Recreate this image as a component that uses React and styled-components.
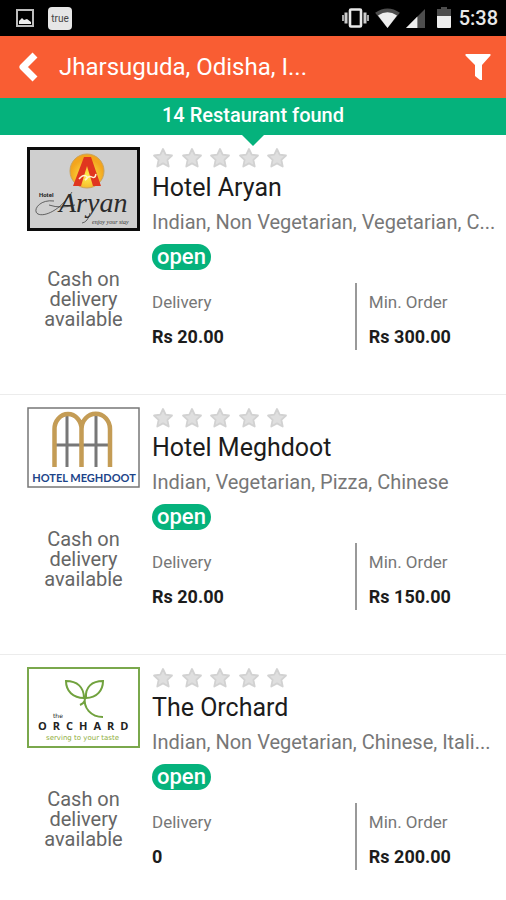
import React from 'react';
import styled, { createGlobalStyle } from 'styled-components';

const GlobalStyle = createGlobalStyle`
  * {
    box-sizing: border-box;
  }

  body {
    margin: 0;
    background: #fff;
    font-family: Roboto, 'Noto Sans', sans-serif;
  }
`;

const Screen = styled.div`
  display: flex;
  flex-direction: column;
  height: 100vh;
`;

const StatusBar = styled.div`
  display: flex;
  align-items: center;
  justify-content: space-between;
  flex: none;
  height: 36px;
  padding: 0 8px 0 16px;
  background: #000;
`;

const StatusGroup = styled.div`
  display: flex;
  align-items: center;
  gap: ${props => props.$gap};
`;

const AppBadge = styled.span`
  width: 24px;
  border-radius: 4px;
  background: #e6e6e6;
  color: #444;
  font-size: 10px;
  line-height: 23px;
  text-align: center;
`;

const Clock = styled.span`
  color: #e8e8e8;
  font-size: 20px;
  font-weight: 500;
  line-height: 24px;
`;

const Header = styled.header`
  display: flex;
  align-items: center;
  flex: none;
  height: 62px;
  padding: 0 8px;
  background: #f95d33;
`;

const IconButton = styled.button`
  display: flex;
  align-items: center;
  justify-content: center;
  flex: none;
  width: 40px;
  height: 48px;
  padding: 0;
  border: 0;
  background: none;
`;

const Place = styled.h1`
  flex: 1;
  min-width: 0;
  margin: 0 0 0 11px;
  overflow: hidden;
  color: #fff;
  font-size: 24px;
  font-weight: 400;
  line-height: 32px;
  text-overflow: ellipsis;
  white-space: nowrap;
`;

const ResultBar = styled.div`
  position: relative;
  flex: none;
  height: 37px;
  background: #05b27c;
  color: #fff;
  font-size: 20px;
  font-weight: 500;
  line-height: 34px;
  text-align: center;

  &::after {
    content: '';
    position: absolute;
    top: 100%;
    left: 50%;
    transform: translateX(-50%);
    border: 11px solid transparent;
    border-top-color: #05b27c;
    border-bottom: 0;
  }
`;

const List = styled.ul`
  flex: 1;
  min-height: 0;
  margin: 0;
  padding: 0;
  overflow-y: auto;
  list-style: none;
  scrollbar-width: none;
`;

const Item = styled.li`
  display: grid;
  grid-template-columns: 113px minmax(0, 1fr);
  column-gap: 12px;
  height: 260px;
  padding: 12px 8px 0 27px;
  border-bottom: 1px solid #ececec;
`;

const LogoSlot = styled.div`
  height: 84px;

  svg {
    display: block;
  }
`;

const PaymentNote = styled.p`
  margin: 38px 0 0;
  color: #666;
  font-size: 20px;
  line-height: 20px;
  text-align: center;
`;

const StarRow = styled.div`
  display: flex;
  justify-content: space-between;
  width: 136px;
  height: 22px;
`;

const Name = styled.h2`
  margin: 3px 0 0;
  color: #1c1c1c;
  font-size: 25px;
  font-weight: 400;
  line-height: 32px;
`;

const Cuisine = styled.p`
  margin: 6px 0 0;
  overflow: hidden;
  color: #777;
  font-size: 20px;
  line-height: 24px;
  text-overflow: ellipsis;
  white-space: nowrap;
`;

const OpenTag = styled.span`
  display: block;
  width: fit-content;
  height: 26px;
  margin-top: 10px;
  padding: 0 5px;
  border-radius: 13px;
  background: #05b27c;
  color: #fff;
  font-size: 22px;
  font-weight: 500;
  line-height: 26px;
`;

const Terms = styled.dl`
  display: grid;
  grid-template-columns: 3fr 2fr;
  margin: 13px 8px 0 0;
`;

const Term = styled.div`
  height: 67px;
  padding: 8px 0 0 ${props => (props.$divided ? '12px' : '0')};
  border-left: ${props => (props.$divided ? '2px solid #999' : '0')};

  dt {
    color: #777;
    font-size: 17px;
    line-height: 22px;
  }

  dd {
    margin: 13px 0 0;
    color: #1c1c1c;
    font-size: 18px;
    font-weight: 700;
    line-height: 22px;
  }
`;

const PictureIcon = () => (
  <svg width="18" height="18" viewBox="0 0 18 18">
    <rect x="1" y="1" width="16" height="16" fill="none" stroke="#bdbdbd" strokeWidth="2" />
    <path d="M3 15v-3l3-3 2 2 3-1 4 3v2z" fill="#eee" />
  </svg>
);

const VibrateIcon = () => (
  <svg width="27" height="20" viewBox="0 0 27 20">
    <rect x="8" y="1.5" width="11" height="17" rx="1" fill="none" stroke="#e8e8e8" strokeWidth="2.6" />
    <path d="M1 7v6M26 7v6" stroke="#bbb" strokeWidth="1.8" />
    <path d="M4 4.5v11M23 4.5v11" stroke="#ccc" strokeWidth="3" />
  </svg>
);

const WifiIcon = () => (
  <svg width="25" height="20" viewBox="0 0 26 21">
    <path d="M0 5Q13-4 26 5L13 21z" fill="#4d4d4d" />
    <path d="M3 8Q13 1 23 8L13 21z" fill="#eee" />
  </svg>
);

const SignalIcon = () => (
  <svg width="19" height="19" viewBox="0 0 20 20">
    <path d="M0 20L20 0v20z" fill="#4d4d4d" />
    <path d="M0 20L12 8v12z" fill="#eee" />
  </svg>
);

const BatteryIcon = () => (
  <svg width="14" height="22" viewBox="0 0 14 22">
    <path d="M4 0h6v2h4v8H0V2h4z" fill="#4d4d4d" />
    <path d="M0 9h14v11a1 1 0 0 1-1 1H1a1 1 0 0 1-1-1z" fill="#eee" />
  </svg>
);

const BackIcon = () => (
  <svg width="20" height="30" viewBox="0 0 20 30">
    <path d="M17 3L5 15l12 12" fill="none" stroke="#fff" strokeWidth="7" strokeLinejoin="round" />
  </svg>
);

const FilterIcon = () => (
  <svg width="26" height="26" viewBox="0 0 26 26">
    <path d="M1 0h24q1 0 .5 1.500L17 11v15h-2l-5-4V11L.5 1.500Q0 0 1 0z" fill="#fff" />
  </svg>
);

const Star = () => (
  <svg width="22" height="22" viewBox="0 0 22 22">
    <path
      d="M11 2l2.700 5.700 6.300.8-4.600 4.300 1.300 6.700L11 16.400l-5.700 3.100 1.300-6.700L2 8.500l6.300-.8z"
      fill="#dfdfdf"
      stroke="#d2d2d2"
      strokeWidth="1.8"
      strokeLinejoin="round"
    />
  </svg>
);

const AryanLogo = () => (
  <svg width="113" height="84" viewBox="0 0 113 84">
    <defs>
      <radialGradient id="sun" cy="65%">
        <stop offset="0" stopColor="#fff04d" />
        <stop offset="1" stopColor="#f3a51e" />
      </radialGradient>
    </defs>
    <rect x="1.5" y="1.5" width="110" height="81" fill="#cfcfcf" stroke="#0c0c0c" strokeWidth="3" />
    <circle cx="60" cy="24" r="17" fill="url(#sun)" stroke="#c9a35c" />
    <path d="M57 10h7l10 29h-8l-6-20-6 20h-8z" fill="#e0361f" />
    <path d="M52 32q4-5 7-3t-1 4q4-5 7-3t4-3" fill="none" stroke="#fff3d6" strokeWidth="1.5" />
    <text x="12" y="50" fontFamily="Roboto" fontSize="6" fontWeight="700" fill="#222">Hotel</text>
    <path
      d="M27 54C12 52 5 64 11 67s22-3 34-22M22 58q12 4 26 0M63 66q-2 9-8 10"
      fill="none"
      stroke="#444"
      strokeWidth=".8"
    />
    <text x="32" y="65" fontFamily="Liberation Serif" fontSize="28" fontStyle="italic" fill="#2b2b2b">Aryan</text>
    <text x="65" y="77" fontFamily="Liberation Serif" fontSize="6" fontStyle="italic" fill="#333">enjoy your stay</text>
  </svg>
);

const MeghdootLogo = () => (
  <svg width="113" height="81" viewBox="0 0 113 81">
    <rect x="1" y="1" width="111" height="79" fill="#fff" stroke="#777" strokeWidth="1.5" />
    <path d="M40 9v51M69 9v51M28 38h55" stroke="#777" strokeWidth="3" />
    <path
      d="M27.500 60V22a13.500 15 0 0 1 27 0v38M54.500 22a14 15 0 0 1 28.500 0v38"
      fill="none"
      stroke="#c49c55"
      strokeWidth="4.5"
    />
    <text x="57" y="75" textAnchor="middle" fontFamily="Lato" fontSize="11" fontWeight="700" fill="#1d4489">
      HOTEL MEGHDOOT
    </text>
  </svg>
);

const OrchardLogo = () => (
  <svg width="113" height="81" viewBox="0 0 113 81">
    <rect x="1" y="1" width="111" height="79" fill="#fff" stroke="#7aa84c" strokeWidth="2" />
    <path
      d="M57 31C57 20 50 14 39 14c0 10 7 17 18 17zM59 31c-1-11 6-17 17-17 0 9-6 17-17 17zM57 29q3 6-4 9M58 30c-2 11 6 20 18 20"
      fill="none"
      stroke="#71a23e"
      strokeWidth="2"
    />
    <text x="26" y="51" fontFamily="DejaVu Sans" fontSize="6" fill="#222">the</text>
    <text x="11" y="63" fontFamily="Open Sans" fontSize="11" fontWeight="700" letterSpacing="6" fill="#222">
      ORCHARD
    </text>
    <text x="19" y="73" fontFamily="DejaVu Sans" fontSize="7" fill="#8fae3c">
      serving to your taste
    </text>
  </svg>
);

const restaurants = [
  {
    name: 'Hotel Aryan',
    cuisine: 'Indian, Non Vegetarian, Vegetarian, C...',
    delivery: 'Rs 20.00',
    minOrder: 'Rs 300.00',
    Logo: AryanLogo,
  },
  {
    name: 'Hotel Meghdoot',
    cuisine: 'Indian, Vegetarian, Pizza, Chinese',
    delivery: 'Rs 20.00',
    minOrder: 'Rs 150.00',
    Logo: MeghdootLogo,
  },
  {
    name: 'The Orchard',
    cuisine: 'Indian, Non Vegetarian, Chinese, Itali...',
    delivery: '0',
    minOrder: 'Rs 200.00',
    Logo: OrchardLogo,
  },
];

const Restaurant = ({ name, cuisine, delivery, minOrder, Logo }) => (
  <Item>
    <div>
      <LogoSlot>
        <Logo />
      </LogoSlot>
      <PaymentNote>Cash on delivery available</PaymentNote>
    </div>
    <div>
      <StarRow role="img" aria-label="0 out of 5 stars">
        {[1, 2, 3, 4, 5].map(n => (
          <Star key={n} />
        ))}
      </StarRow>
      <Name>{name}</Name>
      <Cuisine>{cuisine}</Cuisine>
      <OpenTag>open</OpenTag>
      <Terms>
        <Term>
          <dt>Delivery</dt>
          <dd>{delivery}</dd>
        </Term>
        <Term $divided>
          <dt>Min. Order</dt>
          <dd>{minOrder}</dd>
        </Term>
      </Terms>
    </div>
  </Item>
);

const App = () => {
  return (
    <Screen>
      <GlobalStyle />
      <StatusBar>
        <StatusGroup $gap="14px">
          <PictureIcon />
          <AppBadge>true</AppBadge>
        </StatusGroup>
        <StatusGroup $gap="12px">
          <StatusGroup $gap="6px">
            <VibrateIcon />
            <WifiIcon />
            <SignalIcon />
          </StatusGroup>
          <StatusGroup $gap="8px">
            <BatteryIcon />
            <Clock>5:38</Clock>
          </StatusGroup>
        </StatusGroup>
      </StatusBar>
      <Header>
        <IconButton type="button" aria-label="Back">
          <BackIcon />
        </IconButton>
        <Place>Jharsuguda, Odisha, I...</Place>
        <IconButton type="button" aria-label="Filter">
          <FilterIcon />
        </IconButton>
      </Header>
      <ResultBar>14 Restaurant found</ResultBar>
      <List>
        {restaurants.map(restaurant => (
          <Restaurant key={restaurant.name} {...restaurant} />
        ))}
      </List>
    </Screen>
  );
};

export default App;
